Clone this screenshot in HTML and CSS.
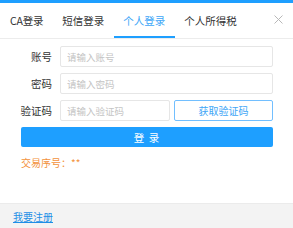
FILE: index.html
```html
<!DOCTYPE html>
<html lang="zh">
<head>
<meta charset="utf-8">
<link rel="stylesheet" href="styles.css">
</head>
<body>
<div class="panel">
  <div class="topbar"></div>
  <div class="tabs">
    <div class="tab">CA登录</div>
    <div class="tab">短信登录</div>
    <div class="tab active">个人登录</div>
    <div class="tab">个人所得税</div>
    <div class="close">
      <svg width="9" height="9" viewBox="0 0 9 9"><path d="M0.5 0.5L8.5 8.5M8.5 0.5L0.5 8.5" stroke="#b8b8b8" stroke-width="1" fill="none"/></svg>
    </div>
  </div>
  <div class="form">
    <div class="row">
      <label class="label">账号</label>
      <input class="input" placeholder="请输入账号">
    </div>
    <div class="row">
      <label class="label">密码</label>
      <input class="input" type="password" placeholder="请输入密码">
    </div>
    <div class="row">
      <label class="label">验证码</label>
      <input class="input code-input" placeholder="请输入验证码">
      <button class="code-btn">获取验证码</button>
    </div>
    <button class="login-btn">登 录</button>
    <div class="serial">交易序号：**</div>
  </div>
  <div class="footer">
    <a class="register" href="#">我要注册</a>
  </div>
</div>
</body>
</html>
```
FILE: styles.css
```css
* { box-sizing: border-box; }
html, body { margin: 0; padding: 0; background: #fff; }
body {
  font-family: "Noto Sans CJK SC", "Noto Sans", sans-serif;
  width: 293px;
  height: 228px;
  overflow: hidden;
}
.panel {
  display: flex;
  flex-direction: column;
  height: 228px;
}
.topbar {
  height: 3px;
  background: #1e9fff;
}
.tabs {
  display: flex;
  align-items: stretch;
  height: 36px;
  border-bottom: 1px solid #ececec;
}
.tab {
  padding: 0 9.5px;
  font-size: 10.5px;
  line-height: 35px;
  color: #333;
  white-space: nowrap;
  border-bottom: 2px solid transparent;
}
.tab:first-child { padding-left: 10px; letter-spacing: -0.2px; }
.tab.active {
  color: #3da6f7;
  border-bottom-color: #1e9fff;
}
.close {
  margin-left: auto;
  margin-right: 10px;
  display: flex;
  align-items: center;
  padding-bottom: 2px;
}
.close svg { display: block; }
.form {
  padding: 7px 20px 0 21px;
  flex: 1;
}
.row {
  display: flex;
  align-items: center;
  height: 21px;
  margin-bottom: 6px;
}
.label {
  width: 31px;
  margin-right: 8px;
  text-align: right;
  white-space: nowrap;
  font-size: 10.5px;
  color: #333;
  direction: rtl;
}
.input {
  flex: 1;
  min-width: 0;
  height: 21px;
  border: 1px solid #e6e6e6;
  border-radius: 2px;
  padding: 0 6px;
  font-family: inherit;
  font-size: 9.5px;
  color: #333;
  outline: none;
}
.input::placeholder { color: #c4c4c4; }
.code-input { flex: none; width: 110px; }
.code-btn {
  flex: 1;
  margin-left: 4px;
  height: 21px;
  border: 1px solid #72bfff;
  border-radius: 2px;
  background: #fff;
  color: #3ea6f6;
  font-family: inherit;
  font-size: 10px;
  padding: 0;
}
.login-btn {
  display: block;
  width: 100%;
  height: 20px;
  border: none;
  border-radius: 2px;
  background: #1e9fff;
  color: #fff;
  font-family: inherit;
  font-size: 10.5px;
  letter-spacing: 1px;
  padding: 0;
}
.serial {
  margin-top: 9px;
  font-size: 10px;
  color: #f3923c;
  line-height: 14px;
}
.footer {
  height: 25px;
  background: #f3f3f3;
  border-top: 1px solid #ebebeb;
  padding-left: 13px;
  display: flex;
  align-items: center;
}
.register {
  font-size: 10px;
  color: #1e8fe6;
  text-decoration: underline;
}
```
